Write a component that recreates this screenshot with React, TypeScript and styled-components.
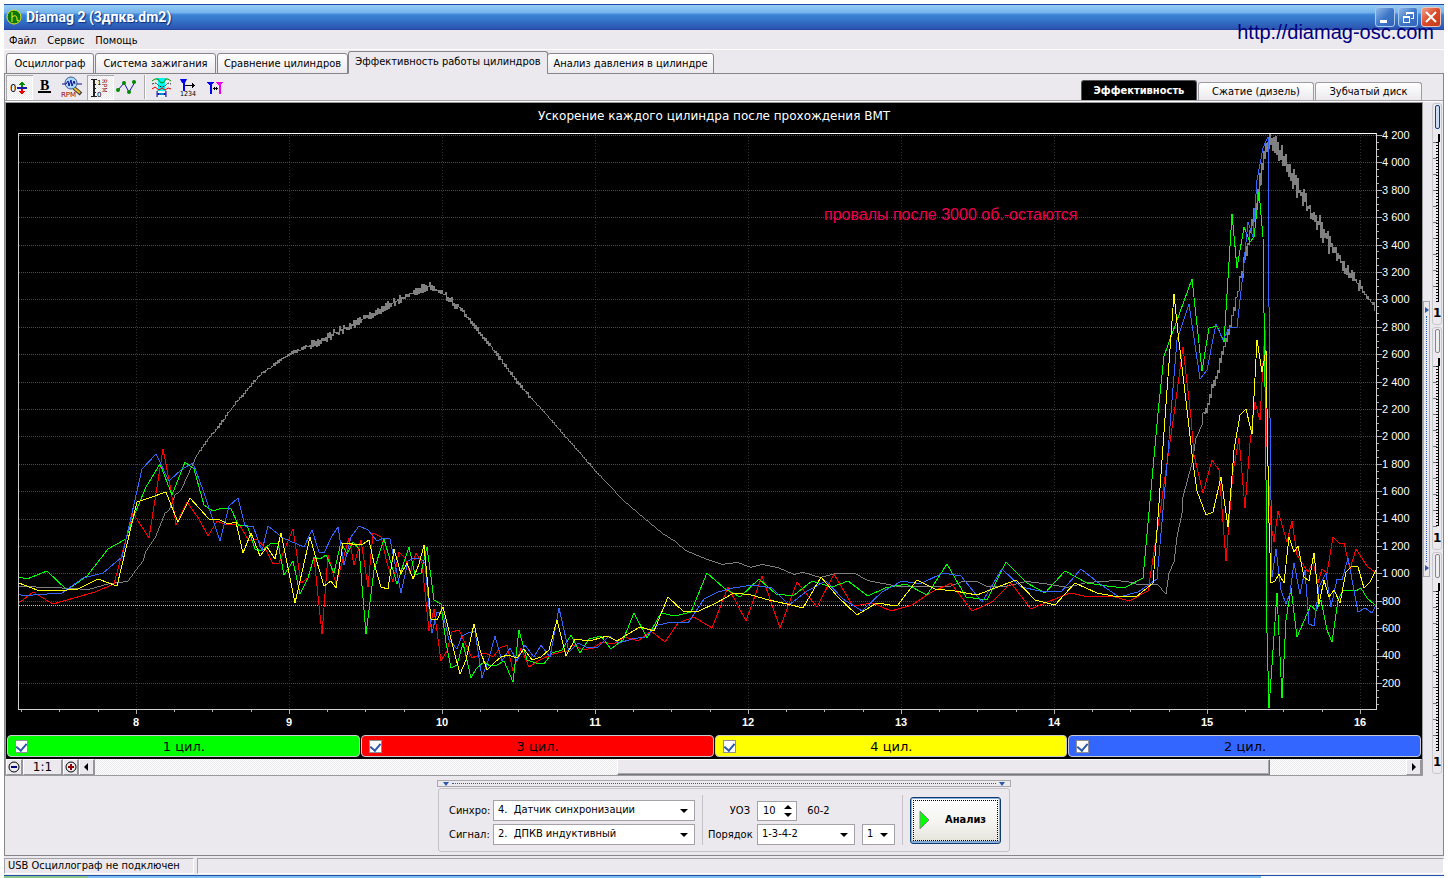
import React from "react";
import styled, { createGlobalStyle, css } from "styled-components";

const face = "#ebe9ed";
const line = "#86868a";
const softLine = "#c4c3c8";
const uiFont = '"DejaVu Sans Condensed", "Liberation Sans", sans-serif';
const wideFont = '"DejaVu Sans", sans-serif';
const dither = css`
  background: repeating-conic-gradient(#ffffff 0 25%, #e9e8ea 0 50%) 0 0 / 2px 2px;
`;

const Global = createGlobalStyle`
  * { box-sizing: border-box; }
  body { margin: 0; background: #fff; font: 11px/14px ${uiFont}; color: #000; }
  button, input, select { font: inherit; color: inherit; margin: 0; }
  svg { display: block; }
`;

const Desktop = styled.div`
  position: relative;
  display: flex;
  flex-direction: column;
  min-height: 100vh;
  padding: 4px 4px 0;
`;
const AppWindow = styled.main`
  display: flex;
  flex-direction: column;
  flex: 1;
  background: ${face};
`;
const TitleBar = styled.header`
  display: flex;
  align-items: center;
  gap: 4px;
  height: 26px;
  padding: 0 3px 0 2px;
  border-top: 1px solid #2048a8;
  border-bottom: 1px solid #2447a0;
  background: linear-gradient(#96cdf3 0, #74b3ec 32%, #5798e0 36%, #3c82d6 42%, #3577cb 60%, #2b53b0 100%);
`;
const TitleText = styled.h1`
  flex: 1;
  margin: 0;
  font: bold 14px/18px Roboto, ${uiFont};
  color: #fff;
  text-shadow: 1px 1px 1px #0f2d78;
`;
const CaptionButtons = styled.div`
  display: flex;
  gap: 3px;
`;
const CaptionButton = styled.button<{ $danger?: boolean }>`
  width: 20px;
  height: 20px;
  padding: 0;
  border: 1px solid ${(p) => (p.$danger ? "#eec3bb" : "#a9c9ef")};
  border-radius: 3px;
  background: ${(p) =>
    p.$danger
      ? "linear-gradient(135deg, #f0a08c, #dc4a28 50%, #c23a1a)"
      : "linear-gradient(135deg, #8fb9ea, #4078c8 50%, #3163b6)"};
`;
const SiteLink = styled.a`
  position: absolute;
  top: 20px;
  right: 14px;
  font: 20px/24px "Liberation Sans", sans-serif;
  color: #00007c;
  text-decoration: none;
`;
const MenuBar = styled.nav`
  display: flex;
  gap: 11px;
  height: 20px;
  padding: 3px 5px 0;
  border-bottom: 1px solid #fff;
`;
const MenuButton = styled.button`
  padding: 0;
  border: 0;
  background: none;
  line-height: 14px;
`;

const TabRow = styled.div`
  display: flex;
  align-items: flex-end;
  height: 24px;
  padding-left: 1px;
  box-shadow: inset 0 -1px ${line};
`;
const Tab = styled.button<{ $active?: boolean; $width: number }>`
  width: ${(p) => p.$width}px;
  height: ${(p) => (p.$active ? 23 : 21)}px;
  margin-left: ${(p) => (p.$active ? 0 : 1)}px;
  margin-right: ${(p) => (p.$active ? -2 : 0)}px;
  padding: 0 0 ${(p) => (p.$active ? 2 : 0)}px;
  border: 1px solid ${line};
  border-bottom-color: ${(p) => (p.$active ? face : line)};
  border-radius: 3px 3px 0 0;
  background: ${(p) => (p.$active ? face : `linear-gradient(#fff, ${face})`)};
  white-space: nowrap;
`;
const MainFrame = styled.section`
  display: flex;
  flex-direction: column;
  flex: 1;
  border: solid ${line};
  border-width: 0 1px 1px;
`;
const Toolbar = styled.div`
  display: flex;
  align-items: flex-end;
  justify-content: space-between;
  height: 28px;
  border-bottom: 1px solid #fff;
  box-shadow: inset 0 -1px #a3a2a7;
`;
const ToolGroup = styled.div`
  display: flex;
  height: 26px;
  padding-left: 1px;
`;
const ToolButton = styled.button<{ $pressed?: boolean }>`
  width: 27px;
  height: 25px;
  padding: 0;
  border: 0;
  background: none;
  ${(p) =>
    p.$pressed &&
    css`
      ${dither}
      box-shadow: inset 1px 1px #a8a8ac, inset -1px -1px #fff;
    `}
`;
const ToolSeparator = styled.div`
  width: 2px;
  height: 24px;
  margin: 0 2px 0 3px;
  border-left: 1px solid #aaa9ae;
  border-right: 1px solid #fff;
`;
const ViewTabs = styled.div`
  display: flex;
  align-items: flex-end;
  gap: 1px;
  height: 20px;
  margin: 0 21px 1px 0;
`;
const ViewTab = styled.button<{ $active?: boolean; $width: number }>`
  width: ${(p) => p.$width}px;
  height: ${(p) => (p.$active ? 20 : 18)}px;
  padding: 0;
  border: 1px solid ${(p) => (p.$active ? "#55545a" : "#9d9ca1")};
  border-bottom: 0;
  border-radius: 3px 3px 0 0;
  background: ${(p) => (p.$active ? "#000" : `linear-gradient(#fff, ${face})`)};
  color: ${(p) => (p.$active ? "#fff" : "#000")};
  font-weight: ${(p) => (p.$active ? "bold" : "normal")};
  white-space: nowrap;
`;

const Workspace = styled.div`
  display: flex;
  flex: 1;
`;
const ChartFrame = styled.div`
  display: flex;
  flex-direction: column;
  flex: 1;
  min-width: 0;
  border: 1px solid #9a999e;
`;
const ChartPanel = styled.div`
  display: grid;
  grid-template-columns: 12px minmax(0, 1fr) 45px;
  grid-template-rows: 30px minmax(360px, 1fr) 25px;
  flex: 1;
  background: #000;
  color: #fff;
`;
const ChartTitle = styled.h2`
  grid-column: 1 / -1;
  margin: 0;
  padding-top: 4px;
  text-align: center;
  font: 12px/18px ${wideFont};
`;
const Plot = styled.div`
  position: relative;
  grid-column: 2;
  min-height: 0;
  border: 1px solid #cfcfcf;
  border-top-color: #fff;
`;
const PlotSvg = styled.svg`
  position: absolute;
  inset: 0;
  width: 100%;
  height: 100%;
  shape-rendering: crispEdges;
  fill: none;
  path, polyline {
    vector-effect: non-scaling-stroke;
    stroke-width: 1px;
  }
`;
const Note = styled.p`
  position: absolute;
  top: 12%;
  right: 22%;
  margin: 0;
  font: 16px/24px "Liberation Sans", sans-serif;
  color: #ee0050;
  white-space: nowrap;
`;
const ValueAxis = styled.div`
  display: flex;
  min-height: 0;
`;
const AxisTicks = styled.svg<{ $w: string; $h: string }>`
  flex: none;
  width: ${(p) => p.$w};
  height: ${(p) => p.$h};
  shape-rendering: crispEdges;
  path {
    vector-effect: non-scaling-stroke;
    stroke: #b0b0b0;
    stroke-width: 1px;
  }
`;
const ValueLabels = styled.div`
  display: flex;
  flex-direction: column;
  justify-content: space-between;
  margin-top: -4px;
  padding-bottom: 21px;
  font: 11px/12px "Liberation Sans", sans-serif;
`;
const TimeAxis = styled.div`
  grid-column: 2;
`;
const TimeLabels = styled.div`
  display: flex;
  justify-content: space-between;
  padding: 0 7px 0 108px;
  font: bold 11px/14px "Liberation Sans", sans-serif;
  span { width: 20px; text-align: center; }
`;
const Legend = styled.div`
  display: grid;
  grid-template-columns: repeat(4, 1fr);
  gap: 1px;
  padding: 0 1px 2px;
  background: #000;
`;
const LegendItem = styled.label<{ $color: string }>`
  display: flex;
  align-items: center;
  height: 22px;
  padding: 0 7px;
  border: 1px solid #c9c9d4;
  border-radius: 4px;
  background: ${(p) => p.$color};
  font: 13px/18px ${wideFont};
  span { flex: 1; text-align: center; padding: 2px 12px 0 0; }
`;
const Tick = styled.input`
  appearance: none;
  display: grid;
  width: 13px;
  height: 13px;
  border: 1px solid #8e8f98;
  background: #fff;
  &:checked::after {
    content: "";
    width: 5px;
    height: 8px;
    margin: 0 0 2px;
    place-self: center;
    border: solid #2c5aa8;
    border-width: 0 2px 2px 0;
    transform: rotate(40deg);
  }
`;

const ScrollRow = styled.div`
  display: flex;
  height: 16px;
  background: ${face};
`;
const ScrollButton = styled.button<{ $width?: number }>`
  display: grid;
  place-items: center;
  flex: none;
  width: ${(p) => p.$width ?? 16}px;
  padding: 0;
  border: solid;
  border-width: 1px 2px 1px 1px;
  border-color: #fff #96959a #96959a #fff;
  background: ${face};
  font: 12px/14px ${wideFont};
`;
const ScrollTrack = styled.div`
  display: flex;
  flex: 1;
  ${dither}
`;
const ScrollGap = styled.div<{ $part: number }>`
  flex: ${(p) => p.$part} 0 0;
`;
const ScrollThumb = styled.div`
  flex: 652 0 0;
  border: 1px solid;
  border-color: #fff #77767b #77767b #fff;
  box-shadow: inset -1px -1px #a9a8ad;
  background: ${face};
`;

const SplitterColumn = styled.div`
  display: flex;
  flex-direction: column;
  &::before, &::after { content: ""; flex: 3; }
`;
const SplitterV = styled.div`
  display: flex;
  flex-direction: column;
  align-items: center;
  flex: 4;
  width: 7px;
  padding: 5px 0;
  border: 1px solid #a9a8ad;
  &::before { content: ""; order: 1; flex: 1; margin: 3px 0; border-left: 1px dotted #2b58a8; }
`;
const ArrowRight = styled.i<{ $order: number }>`
  order: ${(p) => p.$order};
  border: solid transparent;
  border-width: 3px 0 3px 4px;
  border-left-color: #2b58a8;
`;
const Sliders = styled.div`
  display: flex;
  flex-direction: column;
  gap: 2px;
  width: 13px;
  padding: 1px 1px 2px 2px;
`;
const SliderBox = styled.label`
  display: flex;
  flex-direction: column;
  flex: 1;
  border: 1px solid #c9c8cd;
  border-radius: 3px;
  font: bold 12px/16px ${wideFont};
  text-align: center;
  padding: 1px 0 3px;
`;
const SliderBody = styled.span`
  display: grid;
  flex: 1;
  padding-bottom: 3px;
  > * { grid-area: 1 / 1; }
`;
const SliderScale = styled.svg`
  width: 8px;
  height: 100%;
  padding-top: 29px;
  shape-rendering: crispEdges;
  path { vector-effect: non-scaling-stroke; fill: none; }
`;
const Range = styled.input<{ $hot?: boolean }>`
  appearance: none;
  writing-mode: vertical-lr;
  width: 8px;
  height: 100%;
  background: none;
  &::-webkit-slider-thumb {
    appearance: none;
    width: 5px;
    height: 24px;
    border: 1px solid ${(p) => (p.$hot ? "#123f7c" : "#85858a")};
    border-radius: 2px;
    background: ${(p) => (p.$hot ? "#c9dcf4" : "#efeef1")};
  }
`;

const ControlArea = styled.div`
  display: flex;
  flex-direction: column;
  align-items: center;
  gap: 1px;
  height: 79px;
  padding-top: 4px;
`;
const SplitterH = styled.div`
  display: flex;
  align-items: center;
  width: 574px;
  height: 7px;
  padding: 0 5px;
  border: 1px solid #a9a8ad;
  &::before { content: ""; order: 1; flex: 1; margin: 0 3px; border-top: 1px dotted #2b58a8; }
`;
const ArrowDown = styled.i<{ $order: number }>`
  order: ${(p) => p.$order};
  border: solid transparent;
  border-width: 4px 3px 0;
  border-top-color: #2b58a8;
`;
const Controls = styled.form`
  display: flex;
  align-items: center;
  width: 572px;
  height: 64px;
  padding: 0 8px 0 10px;
  border: 1px solid ${softLine};
  border-radius: 3px;
`;
const FieldGrid = styled.div<{ $cols: string }>`
  display: grid;
  grid-template-columns: ${(p) => p.$cols};
  grid-template-rows: 21px 21px;
  align-items: center;
  gap: 3px 0;
  margin-top: 5px;
`;
const FieldLabel = styled.label<{ $right?: boolean }>`
  padding-right: ${(p) => (p.$right ? 7 : 0)}px;
  text-align: ${(p) => (p.$right ? "right" : "left")};
  white-space: nowrap;
`;
const FieldRow = styled.div`
  display: flex;
  align-items: center;
  gap: 7px;
`;
const Separator = styled.div`
  width: 1px;
  height: 50px;
  margin: 0 5px 0 7px;
  background: ${softLine};
`;
const SelectBox = styled.div<{ $width: number }>`
  display: grid;
  align-items: center;
  width: ${(p) => p.$width}px;
  > * { grid-area: 1 / 1; }
`;
const Select = styled.select`
  appearance: none;
  width: 100%;
  height: 21px;
  padding: 0 18px 1px 4px;
  border: 1px solid #a3a2a8;
  border-radius: 0;
  background: #fff;
`;
const DropArrow = styled.i`
  justify-self: end;
  margin-right: 7px;
  border: solid transparent;
  border-width: 4px 4px 0;
  border-top-color: #000;
  pointer-events: none;
`;
const Spin = styled.div`
  display: flex;
  width: 40px;
  height: 20px;
  border: 1px solid #a3a2a8;
  background: #fff;
`;
const SpinInput = styled.input`
  width: 22px;
  padding: 0 0 0 5px;
  border: 0;
  background: none;
`;
const SpinButtons = styled.div`
  display: grid;
  align-content: center;
  gap: 4px;
  width: 16px;
`;
const SpinButton = styled.button<{ $up?: boolean }>`
  width: 0;
  height: 0;
  margin: 0 auto;
  padding: 0;
  border: solid transparent;
  border-width: ${(p) => (p.$up ? "0 4px 4px" : "4px 4px 0")};
  border-bottom-color: ${(p) => (p.$up ? "#000" : "transparent")};
  border-top-color: ${(p) => (p.$up ? "transparent" : "#000")};
  background: none;
`;
const AnalyzeButton = styled.button`
  display: flex;
  align-items: center;
  gap: 15px;
  width: 91px;
  height: 47px;
  margin-left: 2px;
  padding: 0 7px;
  border: 1px solid #0c3b70;
  border-radius: 3px;
  background: linear-gradient(#fff, #f3f2ee 60%, #e4e2da);
  box-shadow: inset 0 0 0 1px #8fb0dc, inset 0 -2px #7ea3d6;
  outline: 1px dotted #000;
  outline-offset: -4px;
  font-weight: bold;
`;

const StatusBar = styled.footer`
  display: flex;
  gap: 3px;
  height: 19px;
  padding: 2px 0 1px;
`;
const StatusCell = styled.div<{ $grow?: boolean }>`
  flex: ${(p) => (p.$grow ? "1" : "0 0 190px")};
  padding-left: 3px;
  border: 1px solid;
  border-color: #a3a2a7 #fff #fff #a3a2a7;
  line-height: 14px;
`;
const Taskbar = styled.div`
  display: flex;
  height: 4px;
  border-top: 1px solid #2050a8;
`;
const TaskbarPart = styled.div<{ $part: number; $color: string }>`
  flex: ${(p) => p.$part} 0 0;
  background: ${(p) => p.$color};
`;

/* Traces: x,y pairs in chart units (x 19..1376, y 134..709). */
const green =
  "19,577 27,579 47,571 67,590 87,576 108,549 126,539 133,518 146,487 160,464 172,495 185,462 194,469 204,505 213,511 222,508 231,509 239,526 247,525 255,549 262,551 271,543 278,543 284,575 293,561 300,594 308,578 314,557 320,559 326,555 334,573 341,542 347,554 353,542 359,549 366,634 374,570 384,539 397,584 409,547 415,575 421,573 427,547 434,600 441,604 446,643 451,668 457,665 463,643 471,678 476,669 484,662 490,666 497,665 504,661 513,682 519,630 527,660 536,663 544,664 552,653 562,650 571,635 580,653 589,639 601,636 611,649 623,640 634,613 647,638 661,613 675,616 691,612 707,573 724,588 740,597 759,579 776,594 793,596 812,581 832,587 848,581 868,596 885,588 906,584 927,595 947,564 966,597 987,600 1006,562 1027,583 1045,593 1065,571 1087,583 1107,586 1124,588 1143,578 1158,413 1164,356 1192,279 1202,371 1209,328 1217,326 1224,342 1232,214 1237,268 1244,227 1250,242 1254,237 1259,192 1263,237 1265,387 1266,480 1267,633 1269,708 1277,593 1282,698 1286,620 1291,588 1297,637 1311,605 1316,611 1321,600 1327,630 1332,642 1338,600 1343,590 1356,591 1361,588 1367,598 1375,605";
const red =
  "19,603 33,592 53,604 95,592 114,584 122,554 133,513 149,538 163,449 171,490 176,525 187,502 199,519 208,536 217,521 227,525 239,524 249,541 257,539 265,548 273,564 279,563 293,529 301,583 308,578 314,557 322,634 328,555 336,584 349,538 354,565 361,540 368,587 373,533 381,537 387,563 393,582 399,552 405,558 410,573 416,553 422,563 429,631 434,609 441,661 447,651 452,632 459,630 465,643 472,658 485,653 493,657 500,648 507,645 513,671 521,648 529,667 538,661 553,654 567,651 573,645 583,650 593,648 602,642 613,644 625,637 638,641 651,631 665,642 678,623 694,617 712,628 728,587 746,621 762,576 780,628 797,582 817,607 834,574 851,603 853,606 873,603 891,611 912,605 930,593 951,583 972,611 992,602 1011,583 1031,609 1050,601 1070,593 1089,597 1112,596 1129,601 1148,591 1160,513 1167,463 1175,407 1183,347 1191,418 1194,455 1203,493 1212,460 1219,470 1226,561 1233,472 1239,438 1245,508 1250,443 1255,402 1260,420 1263,363 1265,329 1267,447 1271,525 1274,542 1278,511 1287,542 1292,521 1297,555 1308,572 1313,562 1318,583 1322,569 1327,573 1333,537 1339,543 1344,543 1350,569 1356,549 1367,566 1376,573";
const yellow =
  "19,583 37,590 67,590 78,589 98,579 117,586 137,502 152,497 166,492 173,510 178,522 190,498 209,519 218,519 228,524 236,522 243,553 251,533 260,556 267,547 275,559 281,533 295,603 310,537 317,562 324,586 331,581 336,588 343,543 349,543 356,545 363,544 369,540 374,563 381,587 388,589 394,549 401,574 407,563 413,579 419,564 424,545 431,619 437,620 443,607 448,627 453,647 460,674 466,660 474,624 480,650 487,670 494,663 501,657 508,655 517,658 524,649 532,660 541,657 549,650 557,620 566,656 575,639 582,640 593,640 607,636 617,641 628,634 640,627 654,631 668,597 684,612 699,611 716,603 734,593 751,595 769,600 787,604 803,608 821,577 837,596 857,615 877,603 897,606 917,580 935,589 955,591 977,595 995,588 1016,580 1035,600 1055,605 1075,583 1097,593 1113,596 1136,597 1153,583 1158,517 1165,418 1174,294 1178,333 1188,418 1193,463 1197,491 1206,515 1213,512 1221,477 1228,527 1234,450 1240,415 1246,409 1252,434 1257,340 1262,372 1266,350 1269,523 1271,583 1275,581 1279,574 1284,583 1289,537 1294,552 1298,546 1304,577 1309,581 1314,553 1319,604 1324,580 1329,597 1334,590 1340,603 1346,572 1352,566 1358,567 1364,588 1370,582 1376,570";
const blue =
  "19,594 23,596 33,595 62,593 83,578 103,573 122,557 142,469 156,454 169,481 182,469 193,463 203,490 220,541 229,506 238,498 245,526 253,526 262,551 268,526 283,538 304,547 312,530 319,552 324,553 332,536 338,527 344,565 351,537 359,526 368,530 377,541 383,538 390,539 401,593 408,561 414,558 420,558 425,563 429,607 432,633 437,612 443,614 449,640 457,649 462,636 468,633 475,631 482,678 489,658 495,636 502,661 510,648 517,661 525,645 534,657 541,645 550,657 559,608 569,652 578,643 588,648 598,647 609,636 619,643 632,639 645,637 658,625 672,622 688,623 704,599 718,592 733,588 753,585 772,588 789,605 807,591 826,581 843,599 862,611 882,592 902,581 920,584 943,573 961,576 982,602 1002,569 1021,587 1040,591 1061,592 1081,569 1100,584 1119,597 1138,592 1157,579 1168,453 1172,400 1177,340 1189,304 1200,379 1207,370 1216,324 1223,340 1230,327 1237,327 1243,273 1248,222 1253,237 1257,180 1263,148 1268,137 1269,307 1270,418 1271,500 1272,577 1276,549 1281,590 1286,604 1290,593 1294,563 1300,594 1305,570 1309,624 1314,626 1319,587 1326,573 1331,607 1337,579 1342,580 1348,558 1358,612 1365,608 1372,613 1376,605";
const rpmBase: [number, number][] = (
  "19,586 52,587 89,589 110,583 128,581 136,570 143,561 146,551 155,538 165,513 169,510 175,495 181,490 187,477 197,455 208,439 216,430 235,404 262,373 290,354 320,341 365,318 400,299 420,290 430,286 445,295 460,308 490,345 520,385 560,430 595,470 623,500 637,512 662,533 675,541 685,550 707,559 722,564 737,562 751,567 762,564 777,567 794,574 803,572 820,577 837,573 855,573 867,580 898,586 950,586 963,581 977,581 987,586 1005,586 1027,581 1050,584 1068,587 1087,582 1117,580 1132,582 1137,584 1157,584 1166,594 1169,573 1174,562 1177,537 1182,513 1183,497 1192,463 1196,438 1202,425 1203,413 1208,407 1212,390 1217,377 1223,350 1232,320 1240,283 1248,243 1257,200 1267,147 1271,137 1283,157 1300,193 1320,227 1340,260 1360,287 1376,308"
)
  .split(" ")
  .map((p) => p.split(",").map(Number) as [number, number]);

/* Measurement jitter grows with engine speed. */
function jitter(x: number) {
  if (x < 200) return 0;
  if (x < 310) return 2;
  if (x < 460) return 5;
  if (x < 530) return 3;
  if (x < 600) return 1;
  if (x < 1205) return 0;
  if (x < 1240) return 6;
  if (x < 1330) return 12;
  return x < 1362 ? 8 : 4;
}
function rpmPoints() {
  let seed = 7;
  const out: string[] = [];
  for (let i = 0; i < rpmBase.length - 1; i++) {
    const [x0, y0] = rpmBase[i];
    const [x1, y1] = rpmBase[i + 1];
    for (let x = x0; x < x1; x++) {
      seed = (seed * 16807) % 2147483647;
      const sign = x % 2 ? 1 : -1;
      const y = y0 + ((y1 - y0) * (x - x0)) / (x1 - x0) + sign * jitter(x) * (seed / 2147483647);
      out.push(`${x},${Math.max(134, Math.round(y))}`);
    }
  }
  return out.join(" ");
}
const rpm = rpmPoints();

const range = (n: number) => Array.from({ length: n }, (_, i) => i);
const gridY = range(21).map((i) => 135 + Math.round((i * 548) / 20));
const gridX = range(9).map((i) => 136 + i * 153);
const valueLabels = range(21).map((i) => {
  const v = 4200 - i * 200;
  return v >= 1000 ? `${Math.floor(v / 1000)} ${String(v % 1000).padStart(3, "0")}` : String(v);
});
const valueTicks = range(84)
  .map((i) => `M0 ${135 + Math.round((i * 548) / 80)}h${i % 4 ? 2 : 5}`)
  .join("");
const timeTicks = range(36)
  .map((i) => `M${21 + Math.round((i * 153) / 4)} 0v${(i + 1) % 4 ? 2 : 4}`)
  .join("");
const scaleTicks = range(11).map((i) => `M0 ${8 + i * 16}h4`).join("");

function ZeroIcon() {
  return (
    <svg width="27" height="25" shapeRendering="crispEdges">
      <text x="4" y="17" fontSize="10" fontFamily="DejaVu Sans">0</text>
      <path d="M11 12h10v2H11z" fill="#1818b0" />
      <path d="M16 6l3 4h-2v2h-2v-2h-2z" fill="#008a00" />
      <path d="M16 20l3-4h-2v-2h-2v2h-2z" fill="#f00000" />
    </svg>
  );
}
function BoldIcon() {
  return (
    <svg width="27" height="25">
      <text x="7" y="15" fontSize="14" fontWeight="bold" fontFamily="Liberation Serif">B</text>
      <path d="M5 17h13" stroke="#000" strokeWidth="2" />
    </svg>
  );
}
function ZoomRpmIcon() {
  return (
    <svg width="27" height="25">
      <path d="M14 13l7 6" stroke="#404040" strokeWidth="4" />
      <path d="M14 13l6 5" stroke="#f0c020" strokeWidth="2" />
      <circle cx="11" cy="8" r="6" fill="#a8d8ff" stroke="#405890" />
      <path d="M2 9h4M17 9h5M6 9l2-3 1 5 2-6 1 6 2-5 1 3" stroke="#10108c" fill="none" />
      <text x="1" y="22" fontSize="7" fontFamily="DejaVu Sans" fill="#a00000" stroke="#a00000" strokeWidth="0">RPM</text>
    </svg>
  );
}
function RulerIcon() {
  return (
    <svg width="27" height="25">
      <path d="M6 4h2v18H6zM8 4h2v1H8zM8 9h1v1H8zM8 13h1v1H8zM8 17h1v1H8zM8 21h2v1H8zM4 4h2v1H4zM4 21h2v1H4z" fill="#202020" />
      <text x="10" y="10" fontSize="7" fontFamily="DejaVu Sans">1</text>
      <text x="10" y="22" fontSize="7" fontFamily="DejaVu Sans">0</text>
      <text transform="translate(15 4) rotate(90)" fontSize="7" fill="#8c1010" fontFamily="DejaVu Sans Condensed">RPM</text>
    </svg>
  );
}
function PointsIcon() {
  return (
    <svg width="27" height="25">
      <path d="M4 15l6-7 5 9 6-10" stroke="#1010c0" fill="none" />
      <g fill="#008a00">
        <circle cx="4" cy="15" r="2" /><circle cx="10" cy="8" r="2" />
        <circle cx="15" cy="17" r="2" /><circle cx="20" cy="7" r="2" />
      </g>
    </svg>
  );
}
function GateIcon() {
  return (
    <svg width="27" height="25">
      <path d="M8 3h11l-2 3v8l1 1v7H9v-7l1-1V6z" fill="#00f4f4" />
      <path d="M10 16h7v2h-7zM10 20h7v2h-7z" fill="#e8fafa" />
      <path d="M4 6l3-2h3l2 3 2 1 2-1 2-3h2l3 2" stroke="#009000" fill="none" />
      <path d="M4 9l4-1 3 3 3 1 3-1 3-3 3 1" stroke="#303030" fill="none" strokeDasharray="2 1" />
      <path d="M4 14l3-2 4 3 3-2 3 2 3-2 3 1" stroke="#f00000" fill="none" />
      <path d="M9 16v6M18 16v6M9 19h9M11 18l-1 1 1 1M16 18l1 1-1 1" stroke="#1010a0" fill="none" />
    </svg>
  );
}
function OrderIcon() {
  return (
    <svg width="27" height="25">
      <path d="M5 4h7l-2 4v8H8V8H7z" fill="#0000f0" />
      <path d="M10 10h9v1h-9zM17 8h1v5h-1zM18 9h1v3h-1zM19 10h1v1h-1z" fill="#000" />
      <text x="5" y="21" fontSize="7" fontFamily="DejaVu Sans Condensed">1234</text>
    </svg>
  );
}
function MarkersIcon() {
  return (
    <svg width="27" height="25" shapeRendering="crispEdges">
      <path d="M5 7h7l-2 3v9H8v-9H7z" fill="#0000f0" />
      <path d="M14 7h7l-2 3v9h-2v-9h-1z" fill="#f000f0" />
      <path d="M11 13h5v1h-5zM12 12h1v3h-1zM14 12h1v3h-1z" fill="#000" />
    </svg>
  );
}

function Drop({ id, width, value }: { id: string; width: number; value: string }) {
  return (
    <SelectBox $width={width}>
      <Select id={id} aria-label={id} defaultValue={value}>
        <option>{value}</option>
      </Select>
      <DropArrow />
    </SelectBox>
  );
}

const cylinders = [
  ["1 цил.", "#00ff00"],
  ["3 цил.", "#ff0000"],
  ["4 цил.", "#ffff00"],
  ["2 цил.", "#3366ff"],
];

export default function App() {
  return (
    <Desktop>
      <Global />
      <AppWindow>
        <TitleBar>
          <svg width="16" height="16" viewBox="0 0 16 16">
            <circle cx="8" cy="8" r="7" fill="#087808" stroke="#e8e820" />
            <path d="M6 3v10M6 8q4-3 5 1v2q0 2 2 0" stroke="#f4f420" fill="none" />
          </svg>
          <TitleText>Diamag 2 (3дпкв.dm2)</TitleText>
          <CaptionButtons>
            <CaptionButton aria-label="Свернуть">
              <svg width="18" height="18"><path d="M4 12h7v3H4z" fill="#fff" /></svg>
            </CaptionButton>
            <CaptionButton aria-label="Восстановить">
              <svg width="18" height="18" fill="#fff">
                <path d="M7 4h8v7h-3v-1h2V6H8v1H7zM4 8h7v7H4zM5 10v4h5v-4z" fillRule="evenodd" />
              </svg>
            </CaptionButton>
            <CaptionButton $danger aria-label="Закрыть">
              <svg width="18" height="18"><path d="M4 4l10 10M14 4L4 14" stroke="#fff" strokeWidth="2" /></svg>
            </CaptionButton>
          </CaptionButtons>
        </TitleBar>
        <MenuBar>
          <MenuButton>Файл</MenuButton>
          <MenuButton>Сервис</MenuButton>
          <MenuButton>Помощь</MenuButton>
        </MenuBar>
        <TabRow>
          <Tab $width={88}>Осциллограф</Tab>
          <Tab $width={121}>Система зажигания</Tab>
          <Tab $width={131}>Сравнение цилиндров</Tab>
          <Tab $width={200} $active>Эффективность работы цилиндров</Tab>
          <Tab $width={167}>Анализ давления в цилиндре</Tab>
        </TabRow>
        <MainFrame>
          <Toolbar>
            <ToolGroup>
              <ToolButton $pressed aria-label="Смещение нуля"><ZeroIcon /></ToolButton>
              <ToolButton aria-label="Жирные линии"><BoldIcon /></ToolButton>
              <ToolButton aria-label="Масштаб"><ZoomRpmIcon /></ToolButton>
              <ToolButton $pressed aria-label="Шкала оборотов"><RulerIcon /></ToolButton>
              <ToolButton aria-label="Точки"><PointsIcon /></ToolButton>
              <ToolSeparator />
              <ToolButton aria-label="Интервал"><GateIcon /></ToolButton>
              <ToolButton aria-label="Порядок цилиндров"><OrderIcon /></ToolButton>
              <ToolButton aria-label="Маркеры"><MarkersIcon /></ToolButton>
            </ToolGroup>
            <ViewTabs>
              <ViewTab $width={116} $active>Эффективность</ViewTab>
              <ViewTab $width={116}>Сжатие (дизель)</ViewTab>
              <ViewTab $width={107}>Зубчатый диск</ViewTab>
            </ViewTabs>
          </Toolbar>
          <Workspace>
            <ChartFrame>
              <ChartPanel>
                <ChartTitle>Ускорение каждого цилиндра после прохождения ВМТ</ChartTitle>
                <Plot>
                  <PlotSvg viewBox="19 134 1357 575" preserveAspectRatio="none">
                    {gridX.map((x) => (
                      <path key={x} d={`M${x} 134V709`} stroke="#303030" strokeDasharray="1 2" />
                    ))}
                    {gridY.map((y) => (
                      <path key={y} d={`M19 ${y}H1376`} stroke="#4a4a4a" strokeDasharray="1 1" />
                    ))}
                    <path d="M19 605H1376" stroke="#40ffff" strokeDasharray="1 1" />
                    <polyline points={rpm} stroke="#808080" />
                    <polyline points={red} stroke="#ff0000" />
                    <polyline points={green} stroke="#00ff00" />
                    <polyline points={blue} stroke="#3366ff" />
                    <polyline points={yellow} stroke="#ffff00" />
                  </PlotSvg>
                  <Note>провалы после 3000 об.-остаются</Note>
                </Plot>
                <ValueAxis>
                  <AxisTicks $w="5px" $h="100%" viewBox="0 133 5 577" preserveAspectRatio="none">
                    <path d={valueTicks} />
                  </AxisTicks>
                  <ValueLabels>
                    {valueLabels.map((v) => <span key={v}>{v}</span>)}
                  </ValueLabels>
                </ValueAxis>
                <TimeAxis>
                  <AxisTicks $w="100%" $h="5px" viewBox="18 0 1359 5" preserveAspectRatio="none">
                    <path d={timeTicks} />
                  </AxisTicks>
                  <TimeLabels>
                    {range(9).map((i) => <span key={i}>{i + 8}</span>)}
                  </TimeLabels>
                </TimeAxis>
              </ChartPanel>
              <Legend>
                {cylinders.map(([name, color]) => (
                  <LegendItem key={name} $color={color}>
                    <Tick type="checkbox" defaultChecked />
                    <span>{name}</span>
                  </LegendItem>
                ))}
              </Legend>
              <ScrollRow>
                <ScrollButton $width={17} aria-label="Уменьшить">
                  <svg width="14" height="14"><circle cx="7" cy="7" r="5" fill="none" stroke="#000" /><path d="M4 7h6" stroke="#000080" strokeWidth="2" /></svg>
                </ScrollButton>
                <ScrollButton $width={40}>1:1</ScrollButton>
                <ScrollButton aria-label="Увеличить">
                  <svg width="14" height="14"><circle cx="7" cy="7" r="5" fill="none" stroke="#000" /><path d="M4 7h6M7 4v6" stroke="#900000" strokeWidth="2" /></svg>
                </ScrollButton>
                <ScrollButton aria-label="Влево">
                  <svg width="8" height="8"><path d="M5 0v8L1 4z" /></svg>
                </ScrollButton>
                <ScrollTrack>
                  <ScrollGap $part={522} />
                  <ScrollThumb />
                  <ScrollGap $part={136} />
                </ScrollTrack>
                <ScrollButton aria-label="Вправо">
                  <svg width="8" height="8"><path d="M2 0v8l4-4z" /></svg>
                </ScrollButton>
              </ScrollRow>
            </ChartFrame>
            <SplitterColumn>
              <SplitterV>
                <ArrowRight $order={0} />
                <ArrowRight $order={2} />
              </SplitterV>
            </SplitterColumn>
            <Sliders>
              {[0, 1, 2].map((i) => (
                <SliderBox key={i}>
                  <SliderBody>
                    <SliderScale viewBox="0 0 8 168" preserveAspectRatio="none">
                      <path d={scaleTicks} stroke="#77767b" />
                      <path d="M4 8V168" stroke="#000" strokeWidth="2" strokeDasharray="1 2" />
                      <path d="M5 0V168" stroke="#000" strokeWidth="1" />
                      <path d="M6 0V8" stroke="#000" strokeWidth="1" />
                    </SliderScale>
                    <Range type="range" min="0" max="100" defaultValue="0" $hot={i === 0} />
                  </SliderBody>
                  1
                </SliderBox>
              ))}
            </Sliders>
          </Workspace>
          <ControlArea>
            <SplitterH>
              <ArrowDown $order={0} />
              <ArrowDown $order={2} />
            </SplitterH>
            <Controls onSubmit={(e) => e.preventDefault()}>
              <FieldGrid $cols="44px 202px">
                <FieldLabel htmlFor="Синхро">Синхро:</FieldLabel>
                <Drop id="Синхро" width={202} value={"4.\u00a0 Датчик синхронизации"} />
                <FieldLabel htmlFor="Сигнал">Сигнал:</FieldLabel>
                <Drop id="Сигнал" width={202} value={"2.\u00a0 ДПКВ индуктивный"} />
              </FieldGrid>
              <Separator />
              <FieldGrid $cols="49px 138px">
                <FieldLabel $right htmlFor="УОЗ">УОЗ</FieldLabel>
                <FieldRow>
                  <Spin>
                    <SpinInput id="УОЗ" defaultValue="10" />
                    <SpinButtons>
                      <SpinButton $up type="button" aria-label="Больше" />
                      <SpinButton type="button" aria-label="Меньше" />
                    </SpinButtons>
                  </Spin>
                  <span>&nbsp;60-2</span>
                </FieldRow>
                <FieldLabel $right htmlFor="Порядок">Порядок</FieldLabel>
                <FieldRow>
                  <Drop id="Порядок" width={98} value="1-3-4-2" />
                  <Drop id="Цилиндр" width={33} value="1" />
                </FieldRow>
              </FieldGrid>
              <Separator />
              <AnalyzeButton type="submit">
                <svg width="12" height="20"><path d="M2 1v18l9-9z" fill="#00ff00" stroke="#888" /></svg>
                Анализ
              </AnalyzeButton>
            </Controls>
          </ControlArea>
        </MainFrame>
        <StatusBar>
          <StatusCell>USB Осциллограф не подключен</StatusCell>
          <StatusCell $grow />
        </StatusBar>
      </AppWindow>
      <Taskbar>
        <TaskbarPart $part={84} $color="#8cc48c" />
        <TaskbarPart $part={1173} $color="#7fbcf0" />
        <TaskbarPart $part={183} $color="#f4faff" />
      </Taskbar>
      <SiteLink href="http://diamag-osc.com">http://diamag-osc.com</SiteLink>
    </Desktop>
  );
}
